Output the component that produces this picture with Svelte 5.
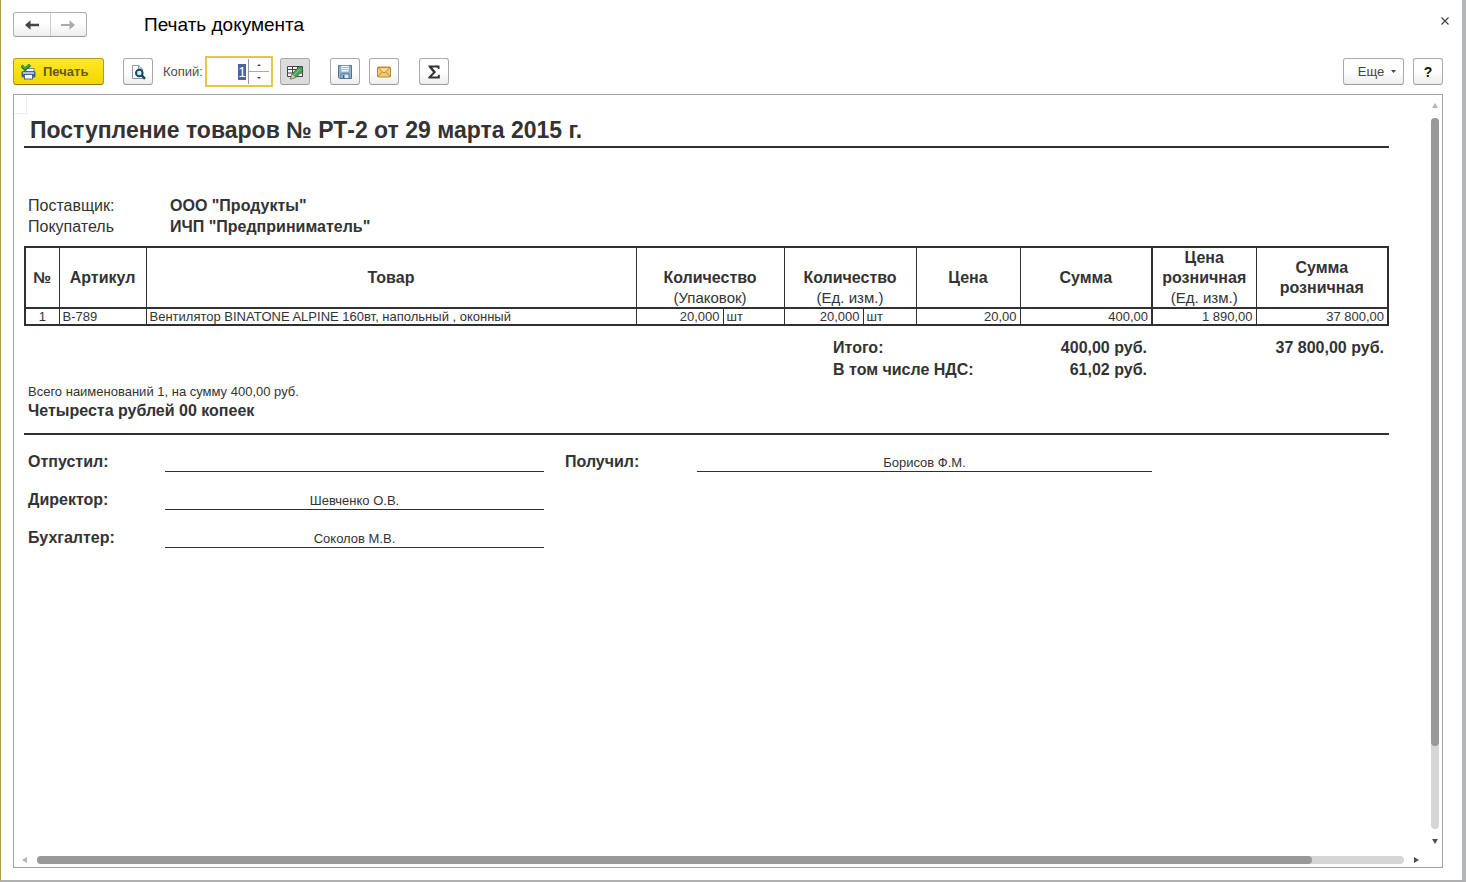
<script lang="ts">
  import { onMount } from 'svelte';

  let copies = $state(1);
  let copiesInput: HTMLInputElement;

  const scroll = { vertical: 88.3, horizontal: 93.3 };

  const rows = [
    {
      sku: 'В-789',
      name: 'Вентилятор BINATONE ALPINE 160вт, напольный , оконный',
      packs: '20,000',
      packUnit: 'шт',
      qty: '20,000',
      unit: 'шт',
      price: '20,00',
      sum: '400,00',
      retailPrice: '1 890,00',
      retailSum: '37 800,00',
    },
  ];

  function step(delta: number) {
    copies = Math.max(1, Number(copies) + delta);
  }

  onMount(() => {
    copiesInput.focus();
    copiesInput.select();
  });
</script>

<div class="window">
  <header class="titlebar">
    <div class="history">
      <button type="button" aria-label="Назад">
        <svg width="14" height="10" viewBox="0 0 14 10"><path d="M0 5L5.5 0.3V3.7H14V6.3H5.5V9.7Z" fill="#444" /></svg>
      </button>
      <button type="button" aria-label="Вперед">
        <svg width="14" height="10" viewBox="0 0 14 10"><path d="M14 5L8.5 0.3V3.9H0V6.1H8.5V9.7Z" fill="#aaa" /></svg>
      </button>
    </div>
    <h1>Печать документа</h1>
    <button type="button" class="close" aria-label="Закрыть">
      <svg width="8" height="8" viewBox="0 0 8 8"><path d="M0.5 0.5L7.5 7.5M7.5 0.5L0.5 7.5" stroke="#444" stroke-width="1.2" /></svg>
    </button>
  </header>

  <div class="toolbar">
    <button type="button" class="btn print">
      <svg width="15" height="16" viewBox="0 0 15 16">
        <rect x="5" y="4.5" width="8" height="5" fill="#fff" stroke="#6d8799" />
        <rect x="0.5" y="7" width="14" height="6.5" rx="1.5" fill="#3f6684" />
        <rect x="2" y="8" width="11" height="2" fill="#a9c4d6" />
        <rect x="3.5" y="10.5" width="8" height="4.5" fill="#fff" stroke="#3f6684" />
        <path d="M0.5 1.5L4 5.2L9 0.8" fill="none" stroke="#17702a" stroke-width="3" />
        <path d="M0.8 1.5L4 4.7L8.6 0.8" fill="none" stroke="#3fb551" stroke-width="1.4" />
      </svg>
      Печать
    </button>

    <button type="button" class="btn icon preview" aria-label="Просмотр">
      <svg width="16" height="16" viewBox="0 0 16 16">
        <path d="M2.5 1.5H8.5L12.5 5V14.5H2.5Z" fill="#fff" stroke="#8298a8" />
        <path d="M8.5 1.5V5H12.5" fill="none" stroke="#8298a8" />
        <circle cx="9.3" cy="9" r="3.3" fill="#d4edf8" stroke="#174c65" stroke-width="2" />
        <path d="M11.7 11.4L15 14.8" stroke="#174c65" stroke-width="2.6" />
      </svg>
    </button>

    <label for="copies">Копий:</label>
    <div class="spinner">
      <input id="copies" type="text" bind:value={copies} bind:this={copiesInput} />
      <div class="steps">
        <button type="button" aria-label="Больше" onclick={() => step(1)}>
          <svg width="4" height="2" viewBox="0 0 4 2"><path d="M0 2L2 0L4 2Z" fill="#444" /></svg>
        </button>
        <button type="button" aria-label="Меньше" onclick={() => step(-1)}>
          <svg width="4" height="2" viewBox="0 0 4 2"><path d="M0 0L2 2L4 0Z" fill="#444" /></svg>
        </button>
      </div>
    </div>

    <button type="button" class="btn icon pressed" aria-label="Редактирование" aria-pressed="true">
      <svg width="18" height="16" viewBox="0 0 18 16">
        <path d="M1.5 2.5H16.5V12.5H1.5Z" fill="#f5f5f5" stroke="#444" />
        <path d="M1.5 5.5H16.5M1.5 9H16.5M6.5 2.5V12.5M11.5 2.5V12.5" stroke="#444" />
        <path d="M4.5 15L6 9.8L12.3 3.4Q14.5 2.2 16.2 4L16.8 6.5L10 13.4Z" fill="#4aa35a" stroke="#2a6a36" stroke-width=".8" />
        <path d="M4.5 15L6 9.8L10 13.4Z" fill="#dcc9a8" stroke="#66715b" stroke-width=".5" />
        <path d="M8 11L14 5" stroke="#86cc92" />
      </svg>
    </button>

    <button type="button" class="btn icon" aria-label="Сохранить">
      <svg width="16" height="16" viewBox="0 0 16 16">
        <path d="M1.5 1.5H14.5V14.5H2.5L1.5 13.5Z" fill="#8fb3d3" stroke="#4d7599" />
        <rect x="4" y="1.5" width="8" height="6.5" fill="#f1f5f8" stroke="#7897b1" stroke-width=".6" />
        <path d="M5 3.5H11M5 5.5H11" stroke="#a8bccc" />
        <rect x="4" y="10" width="8" height="4.5" fill="#e4ecf2" stroke="#4d7599" />
        <rect x="5.5" y="11" width="2" height="3" fill="#3c6487" />
      </svg>
    </button>

    <button type="button" class="btn icon" aria-label="Отправить">
      <svg width="16" height="12" viewBox="0 0 16 12">
        <rect x="1.5" y="1" width="13" height="10" rx="1" fill="#f4cb70" stroke="#bd8638" />
        <path d="M2 10.5L6.3 5.7M14 10.5L9.7 5.7" stroke="#bd8638" />
        <path d="M2 1.5L8 7L14 1.5Z" fill="#fbe0a0" stroke="#bd8638" />
      </svg>
    </button>

    <button type="button" class="btn icon total" aria-label="Сумма">
      <svg width="14" height="14" viewBox="0 0 14 14"><path d="M1.500 0.500H12.500V4H11L10.300 2.500H5.200L9 7L4.800 11.500H10.500L11.300 9.800H12.800V13.500H1.300V12.300L6 7.200L1.500 1.800Z" fill="#333" /></svg>
    </button>

    <button type="button" class="btn more">
      Еще
      <svg width="5" height="3" viewBox="0 0 5 3"><path d="M0 0H5L2.5 3Z" fill="#444" /></svg>
    </button>
    <button type="button" class="btn icon help">?</button>
  </div>

  <main class="sheet">
    <div class="corner"></div>
    <article class="doc">
      <h2>Поступление товаров № РТ-2 от 29 марта 2015 г.</h2>

      <dl class="parties">
        <dt>Поставщик:</dt>
        <dd>ООО "Продукты"</dd>
        <dt>Покупатель</dt>
        <dd>ИЧП "Предприниматель"</dd>
      </dl>

      <table>
        <colgroup>
          <col class="c-num" />
          <col class="c-sku" />
          <col />
          <col class="c-sku" />
          <col class="c-pack-unit" />
          <col class="c-qty" />
          <col class="c-unit" />
          <col class="c-price" />
          <col class="c-sum" />
          <col class="c-price" />
          <col class="c-sum" />
        </colgroup>
        <thead>
          <tr>
            <th>№</th>
            <th>Артикул</th>
            <th>Товар</th>
            <th colspan="2" class="low">Количество<small>(Упаковок)</small></th>
            <th colspan="2" class="low">Количество<small>(Ед. изм.)</small></th>
            <th>Цена</th>
            <th>Сумма</th>
            <th class="low thick">Цена розничная<small>(Ед. изм.)</small></th>
            <th>Сумма розничная</th>
          </tr>
        </thead>
        <tbody>
          {#each rows as row, i}
            <tr>
              <td class="center">{i + 1}</td>
              <td>{row.sku}</td>
              <td>{row.name}</td>
              <td class="num">{row.packs}</td>
              <td>{row.packUnit}</td>
              <td class="num">{row.qty}</td>
              <td>{row.unit}</td>
              <td class="num">{row.price}</td>
              <td class="num">{row.sum}</td>
              <td class="num thick">{row.retailPrice}</td>
              <td class="num">{row.retailSum}</td>
            </tr>
          {/each}
        </tbody>
      </table>

      <div class="totals">
        <span class="label">Итого:</span>
        <span>400,00 руб.</span>
        <span>37 800,00 руб.</span>
        <span class="label">В том числе НДС:</span>
        <span>61,02 руб.</span>
      </div>

      <div class="summary">
        <p>Всего наименований 1, на сумму 400,00 руб.</p>
        <strong>Четыреста рублей 00 копеек</strong>
      </div>

      <div class="signatures">
        <span class="role">Отпустил:</span>
        <span class="line"></span>
        <span class="role second">Получил:</span>
        <span class="line">Борисов Ф.М.</span>
        <span class="role">Директор:</span>
        <span class="line">Шевченко О.В.</span>
        <span class="role">Бухгалтер:</span>
        <span class="line">Соколов М.В.</span>
      </div>
    </article>

    <div class="scroll vertical">
      <svg width="6" height="5" viewBox="0 0 6 5"><path d="M0 5L3 0L6 5Z" fill="#b5b5b5" /></svg>
      <div class="track"><div class="thumb" style="height: {scroll.vertical}%"></div></div>
      <svg width="6" height="5" viewBox="0 0 6 5"><path d="M0 0L3 5L6 0Z" fill="#505050" /></svg>
    </div>
    <div class="scroll horizontal">
      <svg width="5" height="6" viewBox="0 0 5 6"><path d="M5 0L0 3L5 6Z" fill="#b5b5b5" /></svg>
      <div class="track"><div class="thumb" style="width: {scroll.horizontal}%"></div></div>
      <svg width="5" height="6" viewBox="0 0 5 6"><path d="M0 0L5 3L0 6Z" fill="#505050" /></svg>
    </div>
  </main>
</div>

<style>
  :global(body) {
    margin: 0;
    background: #fff;
  }

  .window {
    display: flex;
    flex-direction: column;
    box-sizing: border-box;
    min-height: 100vh;
    padding: 12px 19px 12px 12px;
    border-left: 1px solid #b0a050;
    border-right: 4px solid #b4b6b8;
    border-bottom: 2px solid #b0b0b0;
    background: #fff;
    color: #333;
    font-family: "Liberation Sans", Arial, sans-serif;
    font-size: 13px;
  }

  button,
  input {
    font: inherit;
    color: inherit;
  }

  button {
    display: flex;
    align-items: center;
    justify-content: center;
    padding: 0;
    cursor: pointer;
  }

  .titlebar {
    display: flex;
    align-items: center;
    height: 25px;
  }

  .history {
    display: flex;
    box-sizing: border-box;
    width: 74px;
    height: 25px;
    border: 1px solid #b0b0b0;
    border-bottom-color: #999;
    border-radius: 3px;
    background: linear-gradient(#fff 40%, #eee);
  }

  .history button {
    flex: 1;
    border: none;
    background: none;
  }

  .history button + button {
    border-left: 1px solid #ccc;
  }

  h1 {
    margin: 0 auto 0 57px;
    color: #000;
    font-size: 19px;
    font-weight: normal;
    line-height: 26px;
  }

  .close {
    width: 16px;
    height: 16px;
    margin: 1px -10px 0 0;
    align-self: flex-start;
    border: none;
    background: none;
  }

  .toolbar {
    display: flex;
    align-items: center;
    height: 31px;
    margin: 19px 0 7px;
  }

  .btn {
    box-sizing: border-box;
    height: 27px;
    border: 1px solid #aaa;
    border-bottom-color: #999;
    border-radius: 3px;
    background: linear-gradient(#fff 50%, #ededed);
  }

  .icon {
    width: 30px;
    margin-right: 9px;
  }

  .print {
    justify-content: flex-start;
    width: 91px;
    gap: 7px;
    margin-right: 19px;
    padding-left: 7px;
    border-color: #b79a1c;
    border-bottom-color: #8f7a14;
    background: linear-gradient(#ffe927, #f4d500);
    color: #6a5812;
    font-weight: bold;
  }

  .preview {
    margin-right: 10px;
  }

  label {
    width: 42px;
    color: #4d4d4d;
  }

  .spinner {
    display: flex;
    box-sizing: border-box;
    width: 68px;
    height: 31px;
    margin-right: 7px;
    padding: 1px 2px 1px 0;
    border: 2px solid #e4c845;
    background: #fff;
  }

  .spinner input {
    box-sizing: border-box;
    width: 41px;
    padding: 0 2px 0 0;
    border: none;
    outline: none;
    background: none;
    font-size: 14px;
    text-align: right;
  }

  .spinner input::selection {
    background: #4863a8;
    color: #fff;
  }

  .steps {
    display: flex;
    flex: 1;
    flex-direction: column;
    border-left: 1px solid #999;
  }

  .steps button {
    flex: 1;
    border: none;
    background: none;
  }

  .steps button + button {
    border-top: 1px solid #aaa;
  }

  .pressed {
    margin-right: 20px;
    background: #dcdcdc;
  }

  .total {
    margin-left: 11px;
  }

  .more {
    width: 61px;
    gap: 7px;
    margin-left: auto;
    margin-right: 9px;
    padding-left: 7px;
    color: #444;
  }

  .help {
    margin-right: 0;
    color: #111;
    font-size: 14px;
    font-weight: bold;
  }

  .sheet {
    display: grid;
    flex: 1;
    grid-template-columns: 1fr 15px;
    grid-template-rows: 1fr 15px;
    position: relative;
    border: 1px solid #a0a0a5;
  }

  .corner {
    position: absolute;
    top: 0;
    left: 0;
    width: 12px;
    height: 18px;
    border-right: 1px solid #ece8f2;
    border-bottom: 1px solid #ece8f2;
  }

  .doc {
    min-width: 0;
    padding: 20px 38px 0 10px;
  }

  h2 {
    margin: 0 0 47px;
    padding: 0 6px 1px;
    border-bottom: 2px solid #303030;
    font-size: 23px;
    line-height: 30px;
  }

  .parties {
    display: grid;
    grid-template-columns: 142px 1fr;
    margin: 0 0 9px;
    padding-left: 4px;
    font-size: 16px;
    line-height: 21px;
  }

  .parties dd {
    margin: 0;
    font-weight: bold;
  }

  table {
    width: 100%;
    border: 2px solid #303030;
    border-collapse: collapse;
    table-layout: fixed;
  }

  .c-num {
    width: 34px;
  }

  .c-sku {
    width: 87px;
  }

  .c-pack-unit {
    width: 61px;
  }

  .c-qty {
    width: 79px;
  }

  .c-unit {
    width: 53px;
  }

  .c-price {
    width: 104px;
  }

  .c-sum {
    width: 132px;
  }

  th,
  td {
    padding: 0 3px;
    border: 1px solid #303030;
  }

  th {
    height: 59px;
    padding: 0;
    border-bottom-width: 2px;
    font-size: 16px;
    line-height: 20px;
  }

  th.low {
    vertical-align: bottom;
  }

  th small {
    display: block;
    font-size: 15px;
    font-weight: normal;
    line-height: 19px;
  }

  td {
    height: 15px;
    line-height: 15px;
    white-space: nowrap;
  }

  .thick {
    border-left-width: 2px;
  }

  .center {
    text-align: center;
  }

  .num {
    text-align: right;
  }

  .totals {
    display: grid;
    grid-template-columns: 1fr 133px 237px;
    margin-top: 11px;
    font-size: 16px;
    font-weight: bold;
    line-height: 22px;
    text-align: right;
  }

  .totals span {
    padding-right: 5px;
  }

  .totals .label {
    justify-self: end;
    box-sizing: border-box;
    width: 186px;
    text-align: left;
  }

  .summary {
    padding: 2px 4px 12px;
    border-bottom: 2px solid #303030;
    line-height: 18px;
  }

  .summary p {
    margin: 0;
  }

  .summary strong {
    display: block;
    font-size: 16px;
    line-height: 20px;
  }

  .signatures {
    display: grid;
    grid-template-columns: 141px 379fr 21px 132px 455fr 237px;
    grid-auto-rows: 20px;
    row-gap: 18px;
    margin-top: 17px;
  }

  .role {
    grid-column: 1;
    padding-left: 4px;
    font-size: 16px;
    font-weight: bold;
    line-height: 20px;
  }

  .role.second {
    grid-column: 4;
    padding-left: 0;
  }

  .line {
    border-bottom: 1px solid #303030;
    line-height: 22px;
    text-align: center;
  }

  .scroll {
    display: flex;
    align-items: center;
    gap: 10px;
  }

  .vertical {
    flex-direction: column;
    padding: 8px 0;
  }

  .horizontal {
    grid-column: 1;
    padding: 0 8px;
  }

  .track {
    flex: 1;
    border-radius: 4px;
    background: #d6d6d6;
  }

  .vertical .track {
    width: 8px;
  }

  .horizontal .track {
    height: 8px;
  }

  .thumb {
    height: 100%;
    border-radius: 4px;
    background: #999;
  }
</style>
